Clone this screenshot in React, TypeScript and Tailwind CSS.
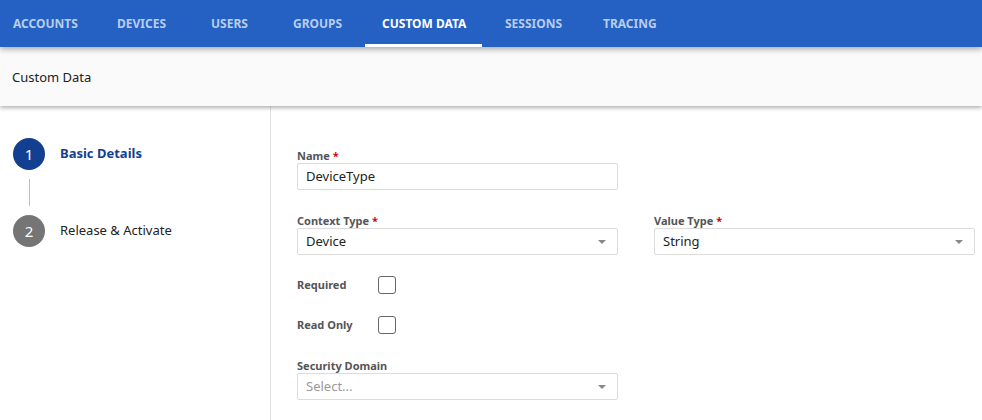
const tabs = [
  { label: "ACCOUNTS", w: "w-[104px] -ml-[4px]" },
  { label: "DEVICES", w: "w-[94px]" },
  { label: "USERS", w: "w-[82px]" },
  { label: "GROUPS", w: "w-[89px]" },
  { label: "CUSTOM DATA", w: "w-[117px] mr-[6px]" },
  { label: "SESSIONS", w: "w-[98px]" },
  { label: "TRACING", w: "w-[98px]" },
];

function Label({ text, required }: { text: string; required?: boolean }) {
  return (
    <div className="h-[11px] text-[11px] font-bold text-[#555] leading-none mb-[2px]">
      {text}
      {required && <span className="text-[#d0021b]"> *</span>}
    </div>
  );
}

function Select({ value, placeholder }: { value?: string; placeholder?: string }) {
  return (
    <div className="h-[27px] border border-[#dcdcdc] rounded-[2px] bg-white flex items-center justify-between pl-[8px] pr-[11px]">
      {value ? (
        <span className="text-[13px] text-[#222]">{value}</span>
      ) : (
        <span className="text-[13px] text-[#999]">{placeholder}</span>
      )}
      <span className="w-0 h-0 border-l-[4px] border-r-[4px] border-t-[4px] border-l-transparent border-r-transparent border-t-[#888]" />
    </div>
  );
}

export default function App() {
  return (
    <div className="w-[982px] h-[420px] overflow-hidden bg-white font-['Noto_Sans',sans-serif]">
      {/* top nav */}
      <div className="h-[47px] bg-[#2461c2] flex relative z-20 shadow-[0_2px_6px_rgba(0,0,0,0.35)]">
        {tabs.map((t) => {
          const active = t.label === "CUSTOM DATA";
          return (
            <div
              key={t.label}
              className={`${t.w} shrink-0 h-full flex items-center pl-[17px] pt-[3px] text-[12px] font-bold whitespace-nowrap border-b-[3px] ${
                active ? "text-white border-white" : "text-[#b9cdee] border-transparent"
              }`}
            >
              {t.label}
            </div>
          );
        })}
      </div>

      {/* page header */}
      <div className="h-[59px] bg-[#fafafa] flex items-center px-[12px] pt-[2px] relative z-10 shadow-[0_2px_4px_rgba(0,0,0,0.3)]">
        <span className="text-[13px] text-[#222]">Custom Data</span>
      </div>

      <div className="flex h-[314px]">
        {/* stepper */}
        <div className="w-[271px] border-r border-[#e0e0e0] pt-[32px] pl-[13px]">
          <div className="flex items-center gap-[15px]">
            <div className="w-[32px] h-[32px] rounded-full bg-[#123f8f] text-white text-[15px] flex items-center justify-center">
              1
            </div>
            <span className="text-[13px] font-bold text-[#123f8f]">Basic Details</span>
          </div>
          <div className="ml-[16px] w-px h-[27px] bg-[#bdbdbd] my-[9px]" />
          <div className="flex items-center gap-[15px]">
            <div className="w-[32px] h-[32px] rounded-full bg-[#757575] text-white text-[15px] flex items-center justify-center">
              2
            </div>
            <span className="text-[13px] text-[#222]">Release &amp; Activate</span>
          </div>
        </div>

        {/* form */}
        <div className="flex-1 pt-[44px] pl-[26px] pr-[7px]">
          <div className="w-[321px]">
            <Label text="Name" required />
            <div className="h-[27px] border border-[#dcdcdc] rounded-[2px] flex items-center px-[8px] text-[13px] text-[#222]">
              DeviceType
            </div>
          </div>

          <div className="grid grid-cols-[321px_321px] gap-x-[36px] mt-[25px]">
            <div>
              <Label text="Context Type" required />
              <Select value="Device" />
            </div>
            <div>
              <Label text="Value Type" required />
              <Select value="String" />
            </div>
          </div>

          <div className="mt-[21px] flex items-center">
            <span className="w-[81px] text-[11px] font-bold text-[#555]">Required</span>
            <span className="w-[18px] h-[18px] border border-[#666] rounded-[3px]" />
          </div>
          <div className="mt-[22px] flex items-center">
            <span className="w-[81px] text-[11px] font-bold text-[#555]">Read Only</span>
            <span className="w-[18px] h-[18px] border border-[#666] rounded-[3px]" />
          </div>

          <div className="w-[321px] mt-[26px]">
            <Label text="Security Domain" />
            <Select placeholder="Select..." />
          </div>
        </div>
      </div>
    </div>
  );
}
